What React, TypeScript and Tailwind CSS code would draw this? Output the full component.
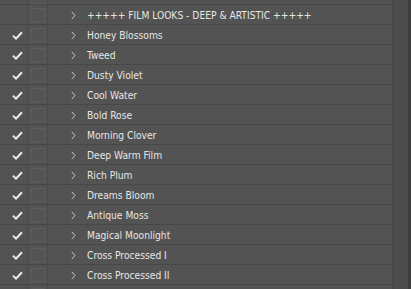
import React from "react";

const items = [
  "Honey Blossoms",
  "Tweed",
  "Dusty Violet",
  "Cool Water",
  "Bold Rose",
  "Morning Clover",
  "Deep Warm Film",
  "Rich Plum",
  "Dreams Bloom",
  "Antique Moss",
  "Magical Moonlight",
  "Cross Processed I",
  "Cross Processed II",
];

function Check() {
  return (
    <svg width="11" height="9" viewBox="0 0 11 9" className="block">
      <path d="M1 4.6 L4 7.6 L10 1.2" fill="none" stroke="#ececec" strokeWidth="2" />
    </svg>
  );
}

function Chevron() {
  return (
    <svg width="5" height="9" viewBox="0 0 5 9" className="block">
      <path d="M0.8 0.8 L4 4.5 L0.8 8.2" fill="none" stroke="#c8c8c8" strokeWidth="1" />
    </svg>
  );
}

function Row({ label, checked, h = "h-[19px]" }: { label?: string; checked?: boolean; h?: string }) {
  return (
    <div className={`flex ${h} border-b border-[#474747] overflow-hidden`}>
      <div className="w-[28px] shrink-0 flex items-center justify-center pl-[7px] pt-[1px] border-r border-[#4a4a4a]">
        {checked ? <Check /> : null}
      </div>
      <div className="w-[20px] shrink-0 flex items-center justify-center border-r border-[#4c4c4c]">
        <div className="w-[14px] h-[14px] border border-[#5d5d5d]" />
      </div>
      <div className="flex-1 flex items-center pl-[23px] pt-[1px]">
        <Chevron />
        <span
          className="ml-[11px] mt-[2px] text-[10.2px] font-stretch-condensed text-[#e6e6e6] whitespace-nowrap leading-none"
          style={{ fontFamily: '"DejaVu Sans Condensed", "DejaVu Sans", sans-serif' }}
        >
          {label}
        </span>
      </div>
    </div>
  );
}

export default function App() {
  return (
    <div className="w-[411px] h-[289px] overflow-hidden bg-[#535353] flex">
      <div className="w-[392px] shrink-0 flex flex-col">
        <div className="h-[5px] border-b border-[#474747] flex shrink-0">
          <div className="w-[28px] border-r border-[#4a4a4a]" />
          <div className="w-[20px] border-r border-[#4c4c4c] flex justify-center items-end">
            <div className="w-[14px] h-[3px] border-x border-b border-[#5d5d5d]" />
          </div>
        </div>
        <Row label="+++++ FILM LOOKS - DEEP & ARTISTIC +++++" h="h-[20px] shrink-0" />
        {items.map((t) => (
          <Row key={t} label={t} checked h="h-[20px] shrink-0" />
        ))}
        <Row checked h="h-[20px] shrink-0" />
      </div>
      <div className="w-[16px] shrink-0 bg-[#4c4c4c] border-l border-[#484848]" />
      <div className="w-[3px] shrink-0 bg-[#3c3c3c]" />
    </div>
  );
}
